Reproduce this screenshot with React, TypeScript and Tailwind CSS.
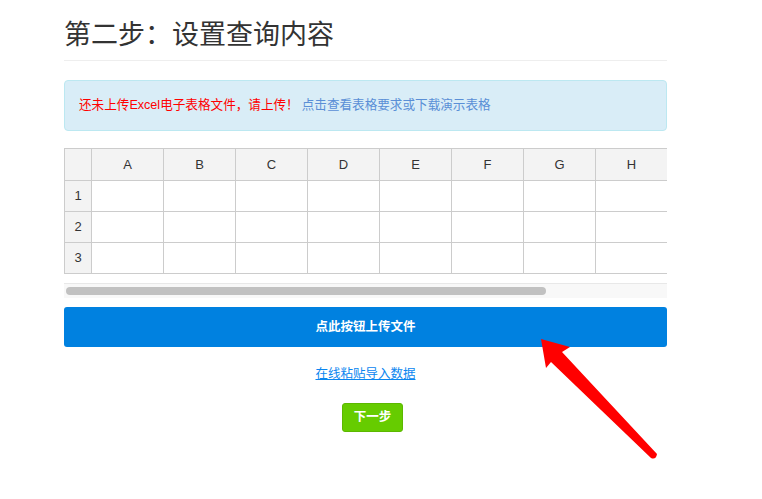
import React from "react";

const cols = ["A", "B", "C", "D", "E", "F", "G", "H"];
const rows = [1, 2, 3];
const font = { fontFamily: '"Liberation Sans", "Noto Sans CJK SC", sans-serif' };

export default function App() {
  return (
    <div className="relative w-[762px] h-[499px] bg-white overflow-hidden" style={font}>
      <div className="ml-[64px] w-[603px] pt-[16px]">
        <h1 className="text-[27px] leading-[38px] text-[#333] pb-[6px] border-b border-[#eeeeee]">
          第二步：设置查询内容
        </h1>
        <div className="mt-[19px] h-[51px] rounded-[4px] border border-[#bce8f1] bg-[#d9edf7] px-[14px] flex items-center text-[12.6px]">
          <span className="text-[#ff0000]">还未上传Excel电子表格文件，请上传！</span>
          <span className="ml-[3px] text-[#5a8fd6]">点击查看表格要求或下载演示表格</span>
        </div>
        <div className="mt-[17px] w-[603px] overflow-hidden">
          <div className="flex flex-col w-[640px] border-l border-t border-[#cccccc] text-[13px] text-[#333]">
            <div className="flex h-[32px] bg-[#f3f3f3]">
              <div className="w-[27px] shrink-0 border-r border-b border-[#cccccc]" />
              {cols.map((c) => (
                <div key={c} className="w-[72px] shrink-0 border-r border-b border-[#cccccc] flex items-center justify-center">
                  {c}
                </div>
              ))}
            </div>
            {rows.map((r) => (
              <div key={r} className="flex h-[31px]">
                <div className="w-[27px] shrink-0 bg-[#f3f3f3] border-r border-b border-[#cccccc] flex items-center justify-center">
                  {r}
                </div>
                {cols.map((c) => (
                  <div key={c} className="w-[72px] shrink-0 border-r border-b border-[#cccccc] bg-white" />
                ))}
              </div>
            ))}
          </div>
          <div className="mt-[9px] h-[15px] border-t border-[#e8e8e8] bg-[#f8f8f8] flex items-center px-[2px]">
            <div className="w-[480px] h-[8px] rounded-full bg-[#c1c1c1]" />
          </div>
        </div>
        <div className="mt-[9px] h-[40px] rounded-[3px] bg-[#0081e0] flex items-center justify-center text-white text-[12.5px] font-bold">
          点此按钮上传文件
        </div>
        <div className="mt-[18px] flex justify-center">
          <span className="text-[12.5px] text-[#0a86f0] underline">在线粘贴导入数据</span>
        </div>
        <div className="mt-[19px] flex justify-center pl-[14px]">
          <div className="w-[61px] h-[29px] rounded-[3px] bg-[#66cc00] border border-[#5cb800] flex items-center justify-center text-white text-[12.5px] font-bold">
            下一步
          </div>
        </div>
      </div>
      <svg className="absolute left-0 top-0 pointer-events-none" width="762" height="499" viewBox="0 0 762 499">
        <path
          d="M541 339 L570 347 L562 352 L657 454 Q656 460 651 458 L551 362 L546 368 Z"
          fill="#ff0000"
        />
      </svg>
    </div>
  );
}
